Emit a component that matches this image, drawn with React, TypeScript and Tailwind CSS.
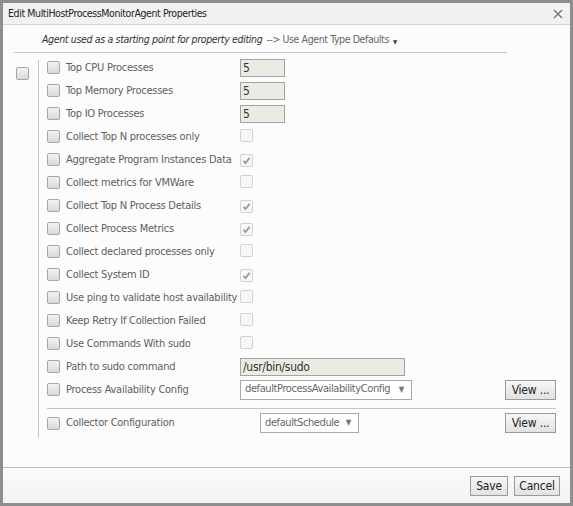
import React from "react"

const font = { fontFamily: '"DejaVu Sans Condensed", "DejaVu Sans", sans-serif', fontStretch: "condensed" as const }

function Check({ checked = false, light = false }: { checked?: boolean; light?: boolean }) {
  return (
    <span
      className={`inline-flex h-[13px] w-[13px] shrink-0 items-center justify-center rounded-[2px] border ${
        light
          ? "border-[#d2d2d2] bg-[#f7f7f7]"
          : "border-[#a6a6a6] bg-gradient-to-b from-[#f2f2f2] to-[#d9d9d9]"
      }`}
    >
      {checked && (
        <svg width="9" height="9" viewBox="0 0 9 9">
          <path d="M1.5 4.8 L3.6 7 L7.6 1.8" fill="none" stroke="#9a9a9a" strokeWidth="1.8" />
        </svg>
      )}
    </span>
  )
}

function TextBox({ value, width }: { value: string; width: string }) {
  return (
    <div
      className={`${width} flex h-[18px] items-center border border-[#a3a3a3] bg-[#ebebe4] px-[2px] pt-[1px] text-[12px] tracking-[-0.3px] text-[#333]`}
    >
      {value}
    </div>
  )
}

function Select({ value, width }: { value: string; width: string }) {
  return (
    <div
      className={`${width} flex h-[20px] items-center justify-between border border-[#a9a9a9] bg-white pl-[4px] pr-[7px] text-[11px] tracking-[-0.4px] text-[#666]`}
    >
      <span>{value}</span>
      <span className="text-[8px] text-[#777]">▼</span>
    </div>
  )
}

function Button({ label, width }: { label: string; width: string }) {
  return (
    <div
      className={`${width} flex h-[20px] items-center justify-center border border-[#9a9a9a] bg-gradient-to-b from-[#f7f7f7] to-[#e2e2e2] text-[12px] tracking-[-0.2px] text-[#222]`}
    >
      {label}
    </div>
  )
}

type Row = { label: string; control?: React.ReactNode; button?: boolean }

const rows: Row[] = [
  { label: "Top CPU Processes", control: <TextBox value="5" width="w-[45px]" /> },
  { label: "Top Memory Processes", control: <TextBox value="5" width="w-[45px]" /> },
  { label: "Top IO Processes", control: <TextBox value="5" width="w-[45px]" /> },
  { label: "Collect Top N processes only", control: <Check light /> },
  { label: "Aggregate Program Instances Data", control: <Check light checked /> },
  { label: "Collect metrics for VMWare", control: <Check light /> },
  { label: "Collect Top N Process Details", control: <Check light checked /> },
  { label: "Collect Process Metrics", control: <Check light checked /> },
  { label: "Collect declared processes only", control: <Check light /> },
  { label: "Collect System ID", control: <Check light checked /> },
  { label: "Use ping to validate host availability", control: <Check light /> },
  { label: "Keep Retry If Collection Failed", control: <Check light /> },
  { label: "Use Commands With sudo", control: <Check light /> },
  { label: "Path to sudo command", control: <TextBox value="/usr/bin/sudo" width="w-[165px]" /> },
  {
    label: "Process Availability Config",
    control: <Select value="defaultProcessAvailabilityConfig" width="w-[172px]" />,
    button: true,
  },
]

export default function App() {
  return (
    <div className="h-[506px] w-[573px] bg-[#8e8e8e] p-[3px]" style={font}>
      <div className="flex h-full flex-col bg-[#fcfcfc]">
        {/* title bar */}
        <div className="flex h-[22px] shrink-0 items-center justify-between border-b border-[#d4d4d4] bg-[#f1f1f1] pl-[5px] pr-[7px]">
          <span className="text-[10.5px] tracking-[-0.4px] text-[#222]">
            Edit MultiHostProcessMonitorAgent Properties
          </span>
          <svg width="10" height="10" viewBox="0 0 10 10">
            <path d="M1 1 L9 9 M9 1 L1 9" stroke="#777" strokeWidth="1.4" />
          </svg>
        </div>

        {/* body */}
        <div className="flex-1">
          <div className="flex h-[27px] items-center pl-[39px] pt-[3px] text-[10.5px]">
            <span className="italic tracking-[-0.35px] text-[#333]">
              Agent used as a starting point for property editing
            </span>
            <span className="ml-[4px] tracking-[-0.4px] text-[#666]">--&gt; Use Agent Type Defaults</span>
            <span className="ml-[4px] mt-[2px] text-[6px] text-[#345]">▼</span>
          </div>
          <div className="ml-[11px] w-[493px] border-t border-[#c8c8c8]" />

          <div className="mt-[3px] flex">
            <div className="pl-[13px] pt-[7px]">
              <Check />
            </div>
            <div className="ml-[9px] mt-[4px] h-[378px] border-l border-[#c4c4c4]" />
            <div className="ml-[8px] flex w-[509px] flex-col">
              {rows.map((r) => (
                <div key={r.label} className="flex h-[23px] items-center">
                  <Check />
                  <span className="ml-[6px] w-[174px] whitespace-nowrap pt-[1px] text-[11px] tracking-[-0.25px] text-[#5e5e5e]">
                    {r.label}
                  </span>
                  <div className="flex-1">{r.control}</div>
                  {r.button && <Button label="View ..." width="w-[51px]" />}
                </div>
              ))}
              <div className="mt-[7px] border-t border-[#c4c4c4]" />
              <div className="mt-[3px] flex h-[22px] items-center">
                <Check />
                <span className="ml-[6px] w-[194px] whitespace-nowrap pt-[1px] text-[11px] tracking-[-0.25px] text-[#5e5e5e]">
                  Collector Configuration
                </span>
                <div className="flex-1">
                  <Select value="defaultSchedule" width="w-[99px]" />
                </div>
                <Button label="View ..." width="w-[51px]" />
              </div>
            </div>
          </div>
        </div>

        {/* footer */}
        <div className="flex h-[36px] shrink-0 items-center justify-end gap-[6px] border-t border-[#bdbdbd] bg-gradient-to-b from-[#fbfbfb] to-[#f2f2f2] pr-[10px]">
          <Button label="Save" width="w-[38px]" />
          <Button label="Cancel" width="w-[46px]" />
        </div>
      </div>
    </div>
  )
}
